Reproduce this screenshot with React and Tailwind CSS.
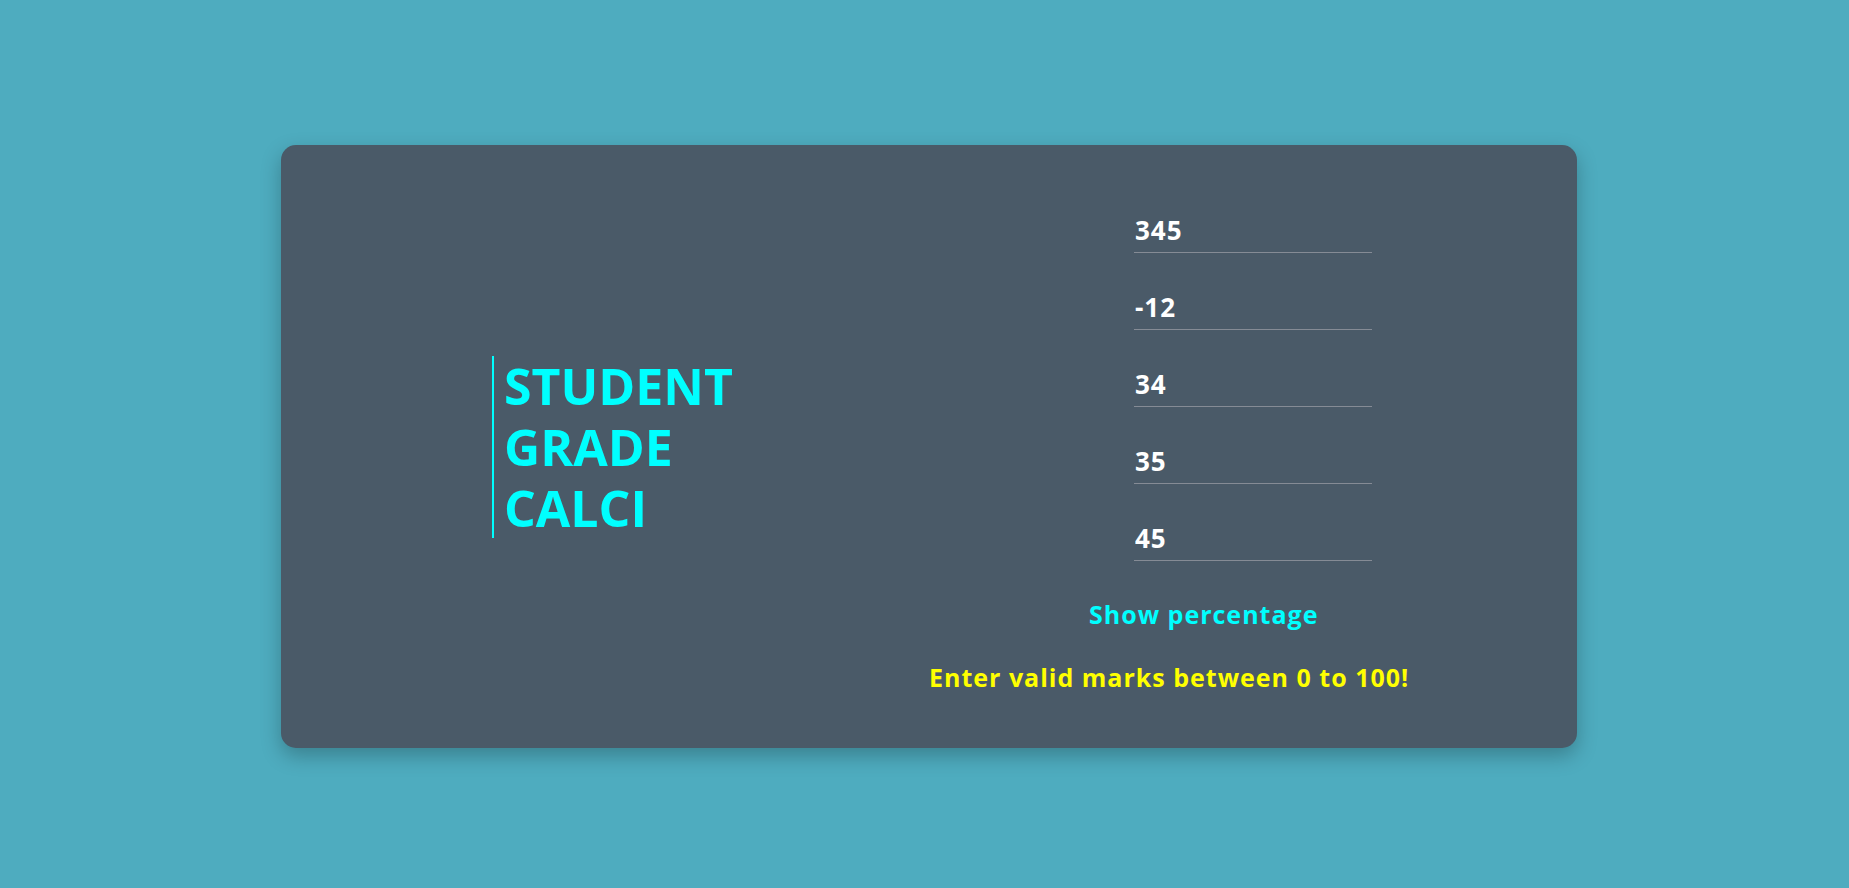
export default function App() {
  const vals = ["345", "-12", "34", "35", "45"];
  return (
    <div
      className="w-full h-[888px] bg-[#4eacbf] flex items-start pl-[281px] pt-[145px]"
      style={{ fontFamily: '"Trebuchet MS", "Open Sans", sans-serif' }}
    >
      <div className="w-[1296px] h-[603px] bg-[#4a5a68] rounded-[15px] shadow-[0_8px_20px_rgba(0,0,0,0.25)] flex">
        <div className="w-1/2 flex items-center pl-[211px]">
          <div className="border-l-2 border-[#00ffff] pl-[10px] text-[#00ffff] font-bold text-[50px] flex flex-col">
            <div className="h-[61px] leading-[61px] overflow-visible">STUDENT</div>
            <div className="h-[61px] leading-[61px] overflow-visible">GRADE</div>
            <div className="h-[60px] leading-[61px] overflow-visible">CALCI</div>
          </div>
        </div>
        <div className="w-1/2 flex flex-col pt-[66px]">
          <div className="ml-[205px] flex flex-col gap-[35px]">
            {vals.map((v) => (
              <input
                key={v}
                readOnly
                value={v}
                className="w-[238px] h-[42px] bg-transparent border-b border-[#858b95] outline-none text-white font-bold text-[26px] tracking-[1px] pl-[1px] pb-[4px]"
              />
            ))}
          </div>
          <button className="self-start ml-[160px] mt-[38px] text-[#00ffff] font-bold text-[25px] leading-[30px] tracking-[1px] bg-transparent">
            Show percentage
          </button>
          <p className="mt-[33px] text-[#ffff00] font-bold text-[25px] leading-[30px] tracking-[1px] whitespace-nowrap">
            Enter valid marks between 0 to 100!
          </p>
        </div>
      </div>
    </div>
  );
}
